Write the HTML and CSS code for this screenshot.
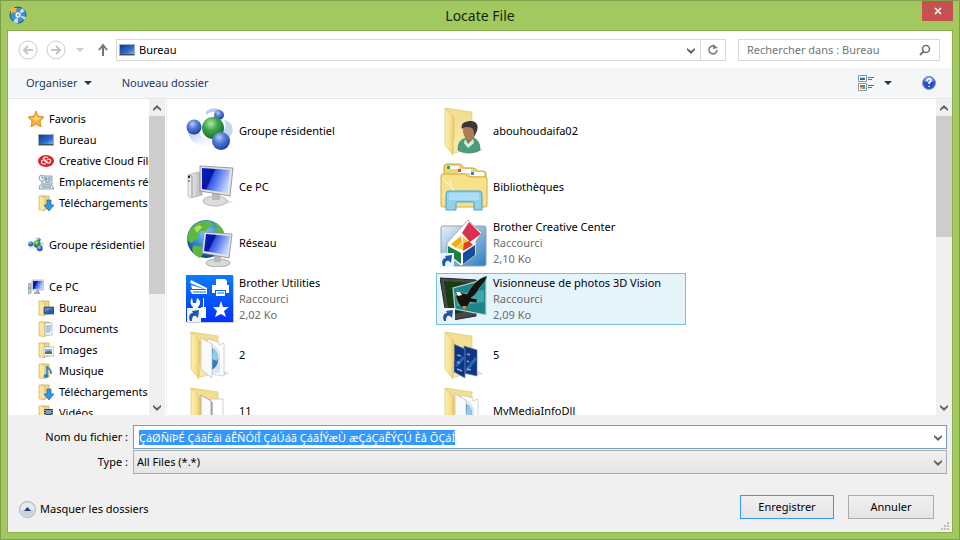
FILE: index.html
```html
<!DOCTYPE html>
<html lang="fr">
<head>
<meta charset="utf-8">
<title>Locate File</title>
<link rel="stylesheet" href="styles.css">
</head>
<body>
<svg class="defs" aria-hidden="true">
  <defs>
    <radialGradient id="blueBall" cx=".4" cy=".3" r=".7"><stop offset="0" stop-color="#b9cdf8"/><stop offset=".4" stop-color="#5b83dc"/><stop offset="1" stop-color="#1b3fa6"/></radialGradient>
    <radialGradient id="greenBall" cx=".4" cy=".3" r=".7"><stop offset="0" stop-color="#b5e6a8"/><stop offset=".45" stop-color="#3fa54a"/><stop offset="1" stop-color="#14702a"/></radialGradient>
    <linearGradient id="trail" x1="0" x2="1" y1="0" y2="1"><stop offset="0" stop-color="#9dbdeb"/><stop offset="1" stop-color="#fff" stop-opacity="0"/></linearGradient>
    <linearGradient id="folderFront" x1="0" x2="1"><stop offset="0" stop-color="#fdf0b4"/><stop offset=".6" stop-color="#f8e08d"/><stop offset="1" stop-color="#e8c96c"/></linearGradient>
    <linearGradient id="folderBack" x1="0" x2="0" y1="0" y2="1"><stop offset="0" stop-color="#f1dd8c"/><stop offset="1" stop-color="#f7e9b0"/></linearGradient>
    <linearGradient id="screen" x1="0" x2="1" y1="0" y2=".4"><stop offset="0" stop-color="#0a1fc4"/><stop offset=".4" stop-color="#0616a0"/><stop offset=".45" stop-color="#2f55e6"/><stop offset="1" stop-color="#bcd0ff"/></linearGradient>
    <linearGradient id="desk" x1="0" x2="1" y1="0" y2="1"><stop offset="0" stop-color="#123a8c"/><stop offset=".6" stop-color="#2f6ad0"/><stop offset="1" stop-color="#7db0f0"/></linearGradient>
    <radialGradient id="globe" cx=".5" cy=".35" r=".65"><stop offset="0" stop-color="#7fd0f5"/><stop offset=".6" stop-color="#2f7fce"/><stop offset="1" stop-color="#123f8a"/></radialGradient>
    <linearGradient id="util" x1="0" x2="0" y1="0" y2="1"><stop offset="0" stop-color="#0a7dfb"/><stop offset="1" stop-color="#0030ff"/></linearGradient>
    <linearGradient id="silver" x1="0" x2="1"><stop offset="0" stop-color="#f5f5f5"/><stop offset="1" stop-color="#b4b6b8"/></linearGradient>
    <linearGradient id="creative" x1="0" x2="1" y1="0" y2="1"><stop offset="0" stop-color="#e9f1f8"/><stop offset="1" stop-color="#2a7fc4"/></linearGradient>
    <symbol id="shortcut" viewBox="0 0 14 14"><path d="M0 0h14v14H0z" fill="#eef3fa"/><path d="M3 13C1 8 3 5 6 5L5 3l7-1-1 8-2-2C6 7 5 9 5 13z" fill="#1f57a8"/></symbol>
    <symbol id="folderBase" viewBox="0 0 48 48"><path d="M5 1l27 4v37L14 46z" fill="url(#folderBack)" stroke="#dcc36b" stroke-width=".6"/></symbol>
    <symbol id="folderFlap" viewBox="0 0 48 48"><path d="M5 1l7 7q2 2 2 4v18l-1 4v14L5 38z" fill="url(#folderFront)" stroke="#d9ba62" stroke-width=".6"/></symbol>
    <symbol id="docs" viewBox="0 0 48 48"><path d="M35 45l8-2-4-3z" fill="#ddd"/><path d="M21 8l12 3v3l5-2v33l-12-2z" fill="#fdfdfd" stroke="#c2c2c2" stroke-width=".7"/><path d="M25 12l6 5 3 4v21h-8z" fill="#dce4f0"/><path d="M25 17c9 2 10 19 0 22z" fill="#2f7fc0"/><path d="M27 18c5 3 6 8 4 12l-5-2z" fill="#8fcbea"/><path d="M15 7l11 6v34l-11-9z" fill="#fafafa" stroke="#bbb" stroke-width=".7"/></symbol>
    <symbol id="smallFolder" viewBox="0 0 16 16"><path d="M3 1h8v13H3z" fill="#eed88b" stroke="#caa64a" stroke-width=".7"/><path d="M1 1h3l3 2v13l-4-1H1z" fill="#fae69e" stroke="#d2ac4f" stroke-width=".7"/></symbol>
    <symbol id="group" viewBox="0 0 48 48"><path d="M20 5c4-5 13-5 17 1l-4 1c-5-4-9-2-13 1z" fill="#b7cdec"/><path d="M2 25c2 10 10 16 25 15l3-8C20 34 14 30 13 24z" fill="url(#trail)"/><path d="M38 13c10 2 11 12 5 18l-9-5c6-3 7-8 4-13z" fill="#c4d7f2"/><circle cx="8" cy="20" r="7.500" fill="url(#blueBall)"/><circle cx="33" cy="8" r="5" fill="url(#blueBall)"/><circle cx="27" cy="21" r="11" fill="url(#greenBall)"/><circle cx="35" cy="34" r="9" fill="url(#blueBall)"/></symbol>
    <symbol id="pc" viewBox="0 0 48 48"><path d="M2 12l10-3 4 2v21L5 35l-3-2z" fill="url(#silver)" stroke="#a5a7a9" stroke-width=".7"/><path d="M2 12l4 1v21" fill="none" stroke="#999"/><path d="M3 13v2" stroke="#222" stroke-width="2"/><path d="M3 17v2" stroke="#50cf2c" stroke-width="2"/><path d="M40 41l7-2-6-2z" fill="#ddd"/><ellipse cx="29" cy="38" rx="12" ry="5" fill="#dadcde" stroke="#a7a9ab" stroke-width=".8"/><path d="M26 29h8v8h-8z" fill="#b9bbbd"/><path d="M14 3l33 2-3 28-30-5z" fill="#dfe1e3" stroke="#85878a" stroke-width=".8"/><path d="M16 5l28 2-3 23-25-4z" fill="url(#screen)"/></symbol>
    <symbol id="pcSmall" viewBox="0 0 16 16"><path d="M0 5l3-1v10l-3 1z" fill="#c9cdd0" stroke="#7d8184" stroke-width=".6"/><path d="M0 8h2v2H0z" fill="#5ad034"/><path d="M6 13h6v2H6zM8 11h3v2H8z" fill="#a9adb0"/><path d="M4 1h12v10H4z" fill="#e3e6e8" stroke="#999da0" stroke-width=".6"/><path d="M5 2h10v8H5z" fill="url(#screen)"/></symbol>
    <symbol id="monitor" viewBox="0 0 16 16"><path d="M0 2h16v12H0z" fill="#9fb3c6"/><path d="M1 3h14v9H1z" fill="url(#desk)"/><path d="M1 12h14v1H1z" fill="#3d5061"/></symbol>
    <symbol id="chevDown" viewBox="0 0 10 10"><path d="M1 3l4 3 4-3v2L5 9 1 5z" fill="currentColor"/></symbol>
    <symbol id="chevUp" viewBox="0 0 10 10"><path d="M1 8l4-3 4 3V6L5 2 1 6z" fill="currentColor"/></symbol>
    <symbol id="triangle" viewBox="0 0 8 4"><path d="M0 0h8L4 4z" fill="currentColor"/></symbol>
    <symbol id="download" viewBox="0 0 16 16"><path d="M9 5h4v5h3l-5 6-5-6h3z" fill="#2f97e3" stroke="#1a65ad" stroke-width=".7"/></symbol>
  </defs>
</svg>
<div class="window">
  <header class="titlebar">
    <svg class="app-icon" viewBox="0 0 18 18"><circle cx="9" cy="9" r="8" fill="#3f93cd" stroke="#2c5676"/><path d="M9 9L4 16a8 8 0 0 0 5 1zM9 9l4-7 3 3zM9 9l8 2-1 3z" fill="#b8e2f8"/><circle cx="9" cy="9" r="3" fill="#e9f4f9" stroke="#6b8ca3" stroke-width=".7"/><circle cx="9" cy="9" r="1" fill="#698599"/><path d="M4 0l1 2 3 0-1 2 1 3-3-1-3 2 0-3-2-2 3-1z" fill="#f8b52a"/></svg>
    <h1 class="title">Locate File</h1>
    <button class="close" type="button" aria-label="Fermer"><svg class="close-icon" viewBox="0 0 8 8"><path d="M1 1l6 6M7 1L1 7" stroke="#fff" stroke-width="1.600"/></svg></button>
  </header>
  <main class="client">
    <div class="navbar">
      <button class="round" type="button" aria-label="Précédent"><svg class="fill" viewBox="0 0 20 20"><circle cx="10" cy="10" r="9" fill="none" stroke="#ccc" stroke-width="1"/><path d="M15 10H6M10 6l-4 4 4 4" fill="none" stroke="#c4c4c4" stroke-width="2"/></svg></button>
      <button class="round" type="button" aria-label="Suivant"><svg class="fill" viewBox="0 0 20 20"><circle cx="10" cy="10" r="9" fill="none" stroke="#ccc" stroke-width="1"/><path d="M5 10h9M10 6l4 4-4 4" fill="none" stroke="#c4c4c4" stroke-width="2"/></svg></button>
      <button class="recent" type="button" aria-label="Emplacements récents"><svg class="tri"><use href="#triangle"/></svg></button>
      <button class="up" type="button" aria-label="Dossier parent"><svg class="fill" viewBox="0 0 14 14"><path d="M7 13V3M3 7l4-5 4 5" fill="none" stroke="#757575" stroke-width="2"/></svg></button>
      <div class="address">
        <svg class="icon16"><use href="#monitor"/></svg>
        <span class="crumb">Bureau</span>
        <button class="addr-btn" type="button" aria-label="Historique"><svg class="chev"><use href="#chevDown"/></svg></button>
        <button class="addr-btn refresh" type="button" aria-label="Actualiser"><svg class="refresh-icon" viewBox="0 0 12 12"><path d="M10 6a4 4 0 1 1-3-4" fill="none" stroke="#808080" stroke-width="1.600"/><path d="M6 0v5l5-1z" fill="#808080"/></svg></button>
      </div>
      <div class="search">
        <input class="search-input" type="search" aria-label="Rechercher" placeholder="Rechercher dans : Bureau">
        <svg class="search-icon" viewBox="0 0 12 12"><circle cx="7" cy="5" r="3.500" fill="none" stroke="#737373" stroke-width="1.600"/><path d="M5 7l-4 4" stroke="#737373" stroke-width="2"/></svg>
      </div>
    </div>
    <div class="toolbar">
      <button class="tool" type="button">Organiser<svg class="tri"><use href="#triangle"/></svg></button>
      <button class="tool" type="button">Nouveau dossier</button>
      <button class="tool view" type="button" aria-label="Affichage"><svg class="icon16" viewBox="0 0 16 16"><path d="M.5.5h8v6h-8zM.5 8.500h8v7h-8z" fill="#fff" stroke="#8297ab"/><path d="M2 2h5v3H2z" fill="#2c6f9c"/><path d="M2 2h5v1H2z" fill="#a8d8f0"/><path d="M2 10h2v2H2z" fill="#e33"/><path d="M4 10h3v2H4z" fill="#39b"/><path d="M2 12h3v2H2z" fill="#e9b21c"/><path d="M5 12h2v2H5z" fill="#4a4"/><path d="M10 2h6v1h-6zM10 4h4v1h-4zM10 10h6v1h-6zM10 12h4v1h-4z" fill="#5b7286"/></svg><svg class="tri"><use href="#triangle"/></svg></button>
      <button class="help" type="button" aria-label="Aide"><svg class="fill" viewBox="0 0 14 14"><circle cx="7" cy="7" r="6.500" fill="#2751c9" stroke="#8f9bb3"/><path d="M2 5a5 5 0 0 1 10 0c-3 2-7 2-10 0z" fill="#6d93e8"/><path d="M5 5c0-3 4-3 4-1 0 2-2 1-2 4M7 10v1" fill="none" stroke="#fff" stroke-width="1.600"/></svg></button>
    </div>
    <div class="panes">
      <nav class="tree" aria-label="Dossiers">
        <a class="node" href="#"><svg class="icon16" viewBox="0 0 16 16"><path d="M8 0l2 5 6 1-4 4 1 6-5-3-5 3 1-6-4-4 6-1z" fill="#fbb12c" stroke="#d87b17" stroke-width=".8"/><path d="M8 3l1 4 4 0-5 3-4-3 3 0z" fill="#ffe083"/></svg>Favoris</a>
        <a class="node sub" href="#"><svg class="icon16"><use href="#monitor"/></svg>Bureau</a>
        <a class="node sub" href="#"><svg class="icon16" viewBox="0 0 16 16"><ellipse cx="8" cy="8" rx="8" ry="6" fill="#df2027"/><path d="M9 10L6 7a2 2 0 1 0-1 4h3M6 6l4 4a2 2 0 1 0 1-4L9 7M5 6a3 3 0 0 1 5-1" fill="none" stroke="#fff" stroke-width="1.100"/></svg>Creative Cloud Files</a>
        <a class="node sub" href="#"><svg class="icon16" viewBox="0 0 16 16"><path d="M4 2h10v8H4zM2 11h12l2 4H1z" fill="#e2e9ee" stroke="#7d8b96" stroke-width=".8"/><path d="M7 4h2v2H7zM10 4h3M10 6h3M7 8h5M4 13h9" fill="none" stroke="#5c8cb2"/><circle cx="4" cy="4" r="3" fill="#f5f8fa" stroke="#94a3ae"/><path d="M4 2v2h2" fill="none" stroke="#56646e" stroke-width=".7"/></svg>Emplacements récents</a>
        <a class="node sub" href="#"><svg class="icon16" viewBox="0 0 16 16"><use href="#smallFolder"/><use href="#download"/></svg>Téléchargements</a>
        <a class="node group" href="#"><svg class="icon16"><use href="#group"/></svg>Groupe résidentiel</a>
        <a class="node group" href="#"><svg class="icon16"><use href="#pcSmall"/></svg>Ce PC</a>
        <a class="node sub" href="#"><svg class="icon16" viewBox="0 0 16 16"><use href="#smallFolder"/><path d="M6 7h10v7H6z" fill="#2b5ea9" stroke="#3d4f60" stroke-width=".7"/><path d="M7 8h8l-8 4z" fill="#568bd4"/></svg>Bureau</a>
        <a class="node sub" href="#"><svg class="icon16" viewBox="0 0 16 16"><use href="#smallFolder"/><path d="M7 2h7v12H7z" fill="#fff" stroke="#9ba6ad" stroke-width=".7"/><path d="M8 5h5M8 7h5M8 9h5M8 11h4" stroke="#5d93c9"/></svg>Documents</a>
        <a class="node sub" href="#"><svg class="icon16" viewBox="0 0 16 16"><use href="#smallFolder"/><path d="M6 5h10v9H6z" fill="#fff" stroke="#9ba6ad" stroke-width=".7"/><path d="M7 7h7v5H7z" fill="#77b6dc"/><path d="M7 10l4-1 3 1v2H7z" fill="#3f7c65"/></svg>Images</a>
        <a class="node sub" href="#"><svg class="icon16" viewBox="0 0 16 16"><use href="#smallFolder"/><path d="M9 12V3c1 3 5 3 4 8" fill="none" stroke="#2a83cc" stroke-width="1.600"/><ellipse cx="8" cy="13" rx="2.500" ry="2" fill="#2a83cc"/></svg>Musique</a>
        <a class="node sub" href="#"><svg class="icon16" viewBox="0 0 16 16"><use href="#smallFolder"/><use href="#download"/></svg>Téléchargements</a>
        <a class="node sub" href="#"><svg class="icon16" viewBox="0 0 16 16"><use href="#smallFolder"/><path d="M6 4h9v11H6z" fill="#333f4a"/><path d="M8 5h5v4H8zM8 10h5v4H8z" fill="#6fa3cf"/><path d="M7 5v9M14 5v9" stroke="#fff" stroke-dasharray="1 1"/></svg>Vidéos</a>
      </nav>
      <div class="scrollbar">
        <button class="arrow" type="button" aria-label="Monter"><svg class="chev"><use href="#chevUp"/></svg></button>
        <div class="track"><div class="thumb thumb-tree"></div></div>
        <button class="arrow" type="button" aria-label="Descendre"><svg class="chev"><use href="#chevDown"/></svg></button>
      </div>
      <section class="files" aria-label="Fichiers">
        <button class="file" type="button"><svg class="icon48"><use href="#group"/></svg><span class="meta"><span>Groupe résidentiel</span></span></button>
        <button class="file" type="button"><svg class="icon48" viewBox="0 0 48 48"><path d="M30 45l13-1-6-6z" fill="#ddd"/><use href="#folderBase"/><use href="#folderFlap"/><path d="M18 43c0-8 3-11 9-12h6c5 1 7 6 7 12-5 4-17 4-22 0z" fill="#4b9d7c" stroke="#2f7358" stroke-width=".6"/><path d="M25 29l3 8 5-6v-5h-8z" fill="#9c6d4b"/><path d="M23 23c0-4 3-6 6-6 4 0 7 3 7 7 0 5-3 9-6 9-4 0-7-4-7-10z" fill="#ad7b57"/><path d="M22 22c-2-6 4-8 9-8 5 0 8 4 6 10l-3 5c0-4 0-6-2-8-3-1-7-2-10 1z" fill="#3a3734"/><path d="M25 32l3 5 5-5 1 4-6 5-4-5z" fill="#d8ece3"/></svg><span class="meta"><span>abouhoudaifa02</span></span></button>
        <button class="file" type="button"><svg class="icon48"><use href="#pc"/></svg><span class="meta"><span>Ce PC</span></span></button>
        <button class="file" type="button"><svg class="icon48" viewBox="0 0 48 48"><path d="M4 4q0-3 3-3h12q3 0 4 3l2 1h8q3 0 4 3h6q3 0 3 3v22H4z" fill="#efd673" stroke="#c5a344"/><path d="M7 3h12v3H7zM18 6h13v4H18zM30 9h14v4H30z" fill="#fff"/><path d="M7 3h3v3H7z" fill="#32a852"/><path d="M18 6h3v3h-3z" fill="#e64a26"/><path d="M31 9h3v3h-3z" fill="#2c83d0"/><path d="M1 13q0-2 2-2h22l4 3h16q2 0 2 2v26q0 2-2 2H3q-2 0-2-2z" fill="#f7e28b" stroke="#cdaa4d"/><path d="M2 15l15 15M2 33l14-4M10 18l3 11" stroke="#fff7cf" stroke-width="1"/><path d="M6 47V31q0-3 3-3h30q3 0 3 3v16h-8v-7q0-1-1-1H17q-1 0-1 1v7z" fill="#90d1ee" stroke="#4d9ec6"/><path d="M9 30h30v7H9z" fill="#b7e3f6" opacity=".7"/></svg><span class="meta"><span>Bibliothèques</span></span></button>
        <button class="file" type="button"><svg class="icon48" viewBox="0 0 48 48"><circle cx="20" cy="20" r="19" fill="url(#globe)"/><path d="M3 12C8 4 17 1 24 2l4 4-5 2-3 4-6 0-3 8-6 4-4-3zM27 3c7 2 11 8 12 14l-5-1-5-4 2-4zM8 26l8 2 2 5-4 6C7 36 4 30 8 26z" fill="#5eb83c"/><path d="M8 9l5-3 3 2-5 6z" fill="#b1df61"/><ellipse cx="32" cy="44" rx="12" ry="4" fill="#d7d9db" stroke="#aaa"/><path d="M28 36h7v7h-7z" fill="#b5b7b9"/><path d="M18 13l28 2-3 24-27-5z" fill="#e2e4e6" stroke="#85878a" stroke-width=".8"/><path d="M20 15l24 2-3 19-23-4z" fill="url(#screen)"/></svg><span class="meta"><span>Réseau</span></span></button>
        <button class="file" type="button"><svg class="icon48" viewBox="0 0 48 48"><rect x="1" y="7" width="45" height="40" rx="2" fill="url(#creative)" stroke="#8fa2b1"/><path d="M28 1l14 13-6 8 0 14-15 11L7 36V24z" fill="#fff" stroke="#9c8f92" stroke-width=".7"/><path d="M29 3l12 12-11 8-8-9z" fill="#d9314f"/><path d="M21 17l-10 8 5 4 6-6z" fill="#f5ae12"/><path d="M23 18l7 6-7 7-6-2 6-6z" fill="#efcf27"/><path d="M24 24l5-2 4 4-10 6z" fill="#e33b28"/><path d="M8 27l13 7v11L8 35z" fill="#1b8044"/><path d="M23 34l12-8v10l-12 9z" fill="#124e9d"/><use href="#shortcut" x="0" y="34" width="14" height="14"/></svg><span class="meta"><span>Brother Creative Center</span><span class="dim">Raccourci</span><span class="dim">2,10 Ko</span></span></button>
        <button class="file" type="button"><svg class="icon48" viewBox="0 0 48 48"><path d="M1 1h47v47H1z" fill="#c9cbd0"/><path d="M0 0h47v47H0z" fill="url(#util)"/><path d="M4 15h17v4H6zM5 5l16 8v2L4 8zM5 10l13 4H6z" fill="#fff"/><path d="M30 4h9l2 2v5H30zM26 10h17v8h-3v-3H29v3h-3zM30 16h9v5h-9z" fill="#fff"/><path d="M7 17h13M31 18h7" stroke="#0a6dfa"/><path d="M6 23l1 5 3 0 1-5c4 2 4 7 1 9v10H7V32c-3-2-3-7-1-9zM17 23h1v9h2v11h-5V32h2z" fill="#fff"/><path d="M35 26l2 6h6l-5 4 2 6-5-3-6 3 2-6-4-4h6z" fill="#fff"/><use href="#shortcut" x="1" y="33" width="14" height="14"/></svg><span class="meta"><span>Brother Utilities</span><span class="dim">Raccourci</span><span class="dim">2,02 Ko</span></span></button>
        <button class="file hover" type="button"><svg class="icon48" viewBox="0 0 48 48"><path d="M0 3l36 2v36L7 46z" fill="#45494b" stroke="#232627"/><path d="M4 6l30 2v27L9 40z" fill="#173d12"/><path d="M13 13l33-9v36l-31-6z" fill="#1c8589" stroke="#c4d6d8" stroke-width="1.200"/><path d="M16 19l28-4v12L17 31z" fill="#3fa6a8"/><path d="M15 17c3-2 5-1 7 1l5 1C31 11 38 3 47 1c-1 6-5 8-8 13-2 4-5 7-8 9l6 1v4l-7-1-3 6h-5c-3-3-5-7-6-11z" fill="#16130f" stroke="#63d0cf" stroke-width=".5"/><path d="M16 17c3-1 5 0 6 3l-4 1z" fill="#fff"/><path d="M15 18l2 1-1 3z" fill="#e3a33c"/><path d="M22 31h5l-3 4z" fill="#d28b41"/><use href="#shortcut" x="1" y="33" width="14" height="14"/></svg><span class="meta"><span>Visionneuse de photos 3D Vision</span><span class="dim">Raccourci</span><span class="dim">2,09 Ko</span></span></button>
        <button class="file" type="button"><svg class="icon48" viewBox="0 0 48 48"><use href="#folderBase"/><use href="#docs"/><use href="#folderFlap"/></svg><span class="meta"><span>2</span></span></button>
        <button class="file" type="button"><svg class="icon48" viewBox="0 0 48 48"><path d="M35 45l8-2-4-3z" fill="#ddd"/><use href="#folderBase"/><path d="M24 15l13 4v26l-13-3z" fill="#0f3582" stroke="#5f79a8" stroke-width=".7"/><path d="M14 13l11 5v29l-11-6z" fill="#0f3582" stroke="#8297ba" stroke-width=".7"/><path d="M26 40l10-13" stroke="#2765bb" stroke-width="3"/><path d="M16 35l8-9" stroke="#2765bb" stroke-width="3"/><path d="M17 24l4 1M17 31l3 1M17 38l5 2M27 23l3 1M27 30l2 1M27 38l4 1" stroke="#8fa9d3" stroke-width="1.500"/><use href="#folderFlap"/></svg><span class="meta"><span>5</span></span></button>
        <button class="file" type="button"><svg class="icon48" viewBox="0 0 48 48"><use href="#folderBase"/><path d="M24 12l13 0v33l-13-2z" fill="#fff" stroke="#bbb" stroke-width=".7"/><path d="M15 8l10 6v33l-10-8z" fill="#fafafa" stroke="#999" stroke-width=".8"/><path d="M26 15v31" stroke="#777"/><use href="#folderFlap"/></svg><span class="meta"><span>11</span></span></button>
        <button class="file" type="button"><svg class="icon48" viewBox="0 0 48 48"><use href="#folderBase"/><use href="#docs"/><use href="#folderFlap"/></svg><span class="meta"><span>MyMediaInfoDll</span></span></button>
      </section>
      <div class="scrollbar">
        <button class="arrow" type="button" aria-label="Monter"><svg class="chev"><use href="#chevUp"/></svg></button>
        <div class="track"><div class="thumb thumb-files"></div></div>
        <button class="arrow" type="button" aria-label="Descendre"><svg class="chev"><use href="#chevDown"/></svg></button>
      </div>
    </div>
    <form class="footer">
      <div class="fields">
        <label class="label" for="name">Nom du fichier :</label>
        <div class="combo"><input class="name" id="name" type="text" value="ÇáØÑíÞÉ ÇáãËáì áÊÑÓíÎ ÇáÚáã ÇáãÍÝæÙ æÇáÇäÊÝÇÚ Èå ÕÇáÍ"><svg class="chev"><use href="#chevDown"/></svg></div>
        <label class="label" for="type">Type :</label>
        <div class="combo combo-type"><select class="type" id="type"><option>All Files (*.*)</option></select><svg class="chev"><use href="#chevDown"/></svg></div>
      </div>
      <div class="actions">
        <button class="hide" type="button"><svg class="hide-icon" viewBox="0 0 17 17"><circle cx="8.500" cy="8.500" r="8" fill="#e4e9f1" stroke="#a5acb8"/><path d="M2 9a6 6 0 0 0 13 0z" fill="#cbd3e0"/><path d="M5 10l3.500-4L12 10z" fill="#263f86"/></svg>Masquer les dossiers</button>
        <button class="btn primary" type="button">Enregistrer</button>
        <button class="btn" type="button">Annuler</button>
      </div>
      <svg class="grip" viewBox="0 0 8 8"><path d="M6 0h2v2H6zM3 3h2v2H3zM6 3h2v2H6zM0 6h2v2H0zM3 6h2v2H3zM6 6h2v2H6z" fill="#bfbfbf"/></svg>
    </form>
  </main>
</div>
<script src="app.js"></script>
</body>
</html>
```
FILE: styles.css
```css
* { box-sizing: border-box; }
body {
  margin: 0;
  font: 11px/16px "Noto Sans", "Open Sans", sans-serif;
  color: #000;
}
button, input, select { font: inherit; color: inherit; }
button { margin: 0; padding: 0; border: 0; background: none; }
svg { display: block; flex: none; }
.defs { position: absolute; width: 0; height: 0; }
.fill { width: 100%; height: 100%; }
.icon16 { width: 16px; height: 16px; }
.icon48 { width: 48px; height: 48px; }
.chev { width: 10px; height: 10px; color: #606060; }
.tri { width: 8px; height: 4px; }

.window {
  display: flex;
  flex-direction: column;
  height: 100vh;
  padding: 0 6px 6px;
  border: 1px solid #7f9f4a;
  background: #a2c95f;
}
.titlebar {
  display: grid;
  grid-template-columns: 31px 1fr 31px;
  flex: none;
  height: 29px;
}
.app-icon { width: 18px; height: 18px; margin: 5px 0 0 2px; }
.title {
  margin: 0;
  font-size: 14px;
  font-weight: 400;
  line-height: 29px;
  text-align: center;
  color: #1c2410;
}
.close {
  display: grid;
  place-items: center;
  height: 20px;
  background: #c75050;
}
.close-icon { width: 8px; height: 8px; }
.client {
  display: flex;
  flex-direction: column;
  flex: 1;
  min-height: 0;
  border: 1px solid #8bad50;
  background: #fff;
}

.navbar {
  display: flex;
  align-items: center;
  flex: none;
  height: 37px;
  padding: 0 12px 0 10px;
}
.round { width: 20px; height: 20px; margin-right: 8px; }
.recent { display: grid; place-items: center; width: 12px; margin-right: 10px; color: #ccc; }
.up { width: 14px; height: 14px; margin-right: 6px; }
.address {
  display: flex;
  align-items: center;
  flex: 1;
  height: 22px;
  padding-left: 2px;
  border: 1px solid #d9d9d9;
}
.crumb { flex: 1; padding-left: 4px; }
.addr-btn { display: grid; place-items: center; width: 18px; height: 20px; }
.refresh { width: 25px; border-left: 1px solid #d9d9d9; }
.refresh-icon, .search-icon { width: 12px; height: 12px; }
.search {
  display: flex;
  align-items: center;
  flex: 0 1 202px;
  height: 22px;
  margin-left: 12px;
  padding: 0 8px;
  border: 1px solid #d9d9d9;
}
.search-input {
  flex: 1;
  min-width: 0;
  padding: 0;
  border: 0;
  outline: 0;
  background: none;
}
.search-input::placeholder { color: #767676; opacity: 1; }

.toolbar {
  display: flex;
  align-items: center;
  flex: none;
  height: 31px;
  padding: 0 16px 0 18px;
  border-bottom: 1px solid #e4e8ed;
  background: #f5f6f7;
  color: #1e395b;
}
.tool { display: flex; align-items: center; gap: 6px; margin-right: 30px; }
.view { gap: 10px; margin-left: auto; }
.help { width: 14px; height: 14px; }

.panes { display: flex; flex: 1; min-height: 0; }
.tree {
  flex: none;
  width: 141px;
  padding: 9px 0 0 20px;
  overflow: hidden;
}
.node {
  display: flex;
  align-items: center;
  gap: 5px;
  height: 21px;
  color: inherit;
  text-decoration: none;
  white-space: nowrap;
}
.sub { padding-left: 10px; }
.group { margin-top: 21px; }
.scrollbar {
  display: flex;
  flex-direction: column;
  flex: none;
  width: 16px;
  background: #f0f0f0;
}
.arrow { display: grid; place-items: center; height: 17px; }
.track { flex: 1; }
.thumb { background: #cdcdcd; }
.thumb-tree { height: 63%; }
.thumb-files { height: 43%; }
.files {
  display: grid;
  grid-template-columns: repeat(auto-fill, 250px);
  grid-auto-rows: 52px;
  gap: 4px;
  flex: 1;
  max-height: 100%;
  margin-left: 1px;
  padding: 6px 200px 0 15px;
  border-left: 1px solid #f0f0f0;
  overflow: hidden;
}
.file {
  display: flex;
  align-items: center;
  gap: 5px;
  padding: 1px 3px;
  border: 1px solid transparent;
  text-align: left;
  white-space: nowrap;
}
.hover { border-color: #70c0e7; background: #e5f3fb; }
.meta { display: flex; flex-direction: column; }
.dim { color: #6d6d6d; }

.footer {
  position: relative;
  flex: none;
  padding: 10px 5px 13px 0;
  background: #f0f0f0;
}
.fields {
  display: grid;
  grid-template-columns: 120px 1fr;
  grid-auto-rows: 24px;
  align-items: center;
  gap: 1px 5px;
}
.label { text-align: right; }
.combo {
  display: flex;
  align-items: center;
  height: 24px;
  padding-right: 3px;
  border: 1px solid #7b9ebd;
  background: #fff;
}
.combo-type {
  border-color: #acacac;
  background: linear-gradient(#f0f0f0, #e5e5e5);
}
.name, .type {
  flex: 1;
  min-width: 0;
  height: 22px;
  padding: 0 5px;
  border: 0;
  outline: 0;
  background: none;
}
.type { padding: 0 3px; appearance: none; }
.name::selection { background: #3399ff; color: #fff; }
.actions {
  display: flex;
  align-items: flex-end;
  gap: 14px;
  margin-top: 21px;
  padding: 0 13px 0 11px;
}
.hide { display: flex; align-items: center; gap: 4px; height: 20px; margin-right: auto; }
.hide-icon { width: 17px; height: 17px; }
.btn {
  width: 86px;
  height: 24px;
  border: 1px solid #acacac;
  background: linear-gradient(#f0f0f0, #e5e5e5);
}
.primary { width: 94px; border-color: #3399ff; }
.grip { position: absolute; right: 3px; bottom: 2px; width: 8px; height: 8px; }
```
FILE: app.js
```js
const nameInput = document.getElementById("name");
nameInput.focus();
nameInput.select();
```
